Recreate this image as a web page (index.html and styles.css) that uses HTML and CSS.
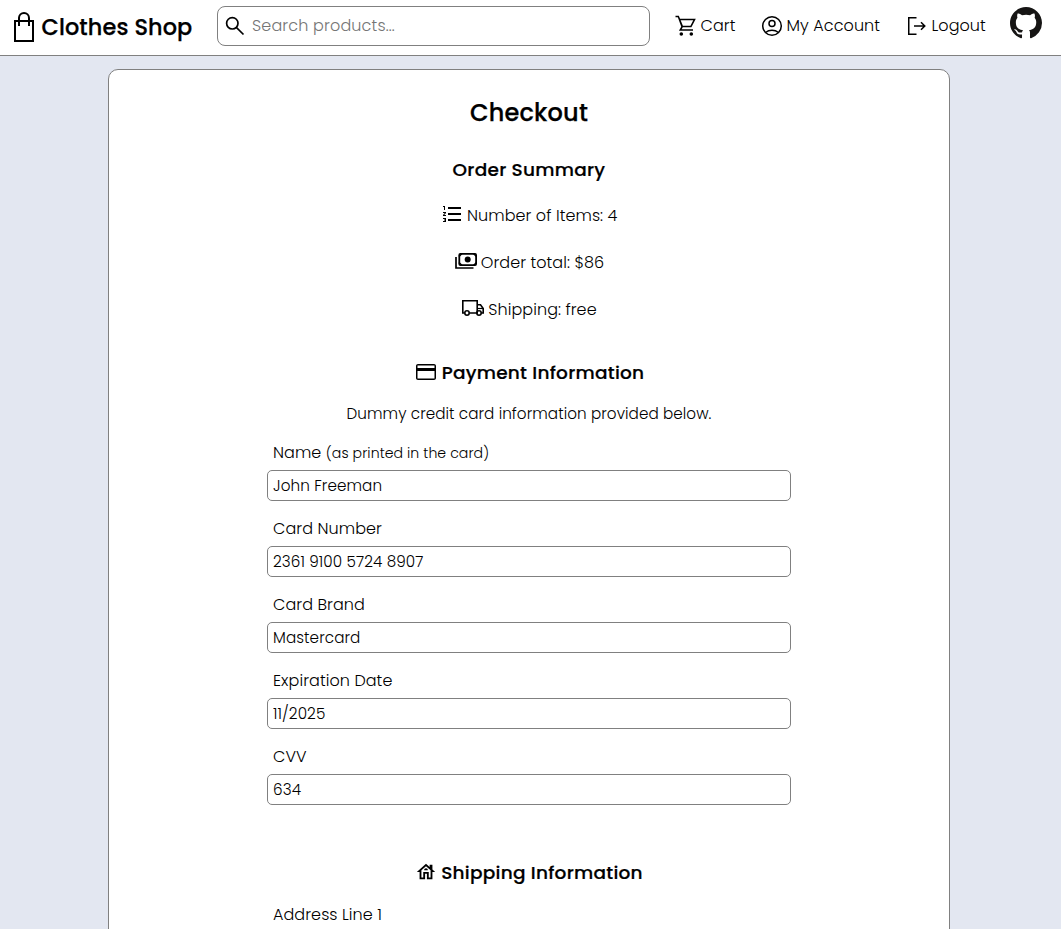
FILE: index.html
```html
<!DOCTYPE html>
<html lang="en">
<head>
<meta charset="utf-8">
<title>Clothes Shop - Checkout</title>
<link rel="stylesheet" href="styles.css">
</head>
<body>
<header class="header">
  <a class="brand">
    <svg width="24" height="32" viewBox="0 0 24 32" fill="none" stroke="#000" stroke-width="2"><path d="M3 10h18v20H3zM7 15V7a5 5 0 0 1 10 0v8"/></svg>
    <span>Clothes Shop</span>
  </a>
  <div class="search">
    <svg width="24" height="24" viewBox="0 0 24 24" fill="none" stroke="#000" stroke-width="1.7"><circle cx="9.3" cy="9.3" r="5.7"/><path d="M13.3 13.3l7.2 7.2"/></svg>
    <span>Search products...</span>
  </div>
  <nav class="nav">
    <a class="nav-item">
      <svg width="24" height="24" viewBox="0 0 24 24"><path d="M5.5 5.500h15l-3.600 7H8zM1.500 2.500H4.300l4 10-2 3.500H19" fill="none" stroke="#000" stroke-width="1.600"/><circle cx="7.300" cy="20" r="1.800"/><circle cx="17.300" cy="20" r="1.800"/></svg>
      <span>Cart</span>
    </a>
    <a class="nav-item">
      <svg width="24" height="24" viewBox="0 0 24 24" fill="none" stroke="#000" stroke-width="1.5"><circle cx="12" cy="12" r="9.300"/><circle cx="12" cy="9.500" r="3"/><path d="M5.500 18.500c3.800-3 9.200-3 13 0"/></svg>
      <span>My Account</span>
    </a>
    <a class="nav-item">
      <svg width="24" height="24" viewBox="0 0 24 24" fill="none" stroke="#000" stroke-width="1.500"><path d="M11.500 3.750H3.750v16.500h7.750M9 12h10.500M16 8.200L19.800 12 16 15.800"/></svg>
      <span>Logout</span>
    </a>
    <a class="github">
      <svg width="32" height="32" viewBox="0 0 16 16" fill="#161514"><path d="M8 0C3.580 0 0 3.580 0 8c0 3.540 2.290 6.530 5.470 7.590.4.070.55-.17.55-.38 0-.19-.01-.82-.01-1.490-2.010.37-2.530-.49-2.690-.94-.09-.23-.48-.94-.82-1.130-.28-.15-.68-.52-.01-.53.63-.01 1.080.58 1.230.82.72 1.210 1.870.87 2.330.66.07-.52.28-.87.51-1.070-1.780-.2-3.640-.89-3.640-3.950 0-.87.31-1.590.82-2.150-.08-.2-.36-1.020.08-2.120 0 0 .67-.21 2.200.82.64-.18 1.320-.27 2-.27s1.360.09 2 .27c1.530-1.040 2.200-.82 2.200-.82.44 1.100.16 1.920.08 2.120.51.56.82 1.270.82 2.150 0 3.070-1.870 3.750-3.650 3.950.29.25.54.73.54 1.480 0 1.070-.01 1.930-.01 2.200 0 .21.15.46.55.38A8.010 8.010 0 0 0 16 8c0-4.420-3.580-8-8-8z"/></svg>
    </a>
  </nav>
</header>
<main class="card">
  <h1 class="title">Checkout</h1>
  <h2 class="heading summary-heading">Order Summary</h2>
  <div class="summary">
    <p class="line items">
      <svg width="24" height="24" viewBox="0 0 24 24"><path d="M2 17h2v.5H3v1h1v.5H2v1h3v-4H2v1zm1-9h1V4H2v1h1v3zm-1 3h1.800L2 13.100v.9h3v-1H3.200L5 10.900V10H2v1zm5-6v2h13V5H7zm0 14h13v-2H7v2zm0-6h13v-2H7v2z"/></svg>
      <span>Number of Items: 4</span>
    </p>
    <p class="line">
      <svg width="24" height="24" viewBox="0 0 24 24" fill="none" stroke="#000" stroke-width="1.800"><rect x="5.300" y="4.900" width="16.800" height="11.200" rx="1"/><path d="M2 8v11h17.500" stroke-width="1.700"/><path d="M5 7.500l3-3M5 13.500l3 3M22.500 7.500l-3-3M22.500 13.500l-3 3" stroke-width="1.500"/><circle cx="13.700" cy="10.500" r="3" fill="#000" stroke="none"/></svg>
      <span>Order total: $86</span>
    </p>
    <p class="line">
      <svg width="24" height="24" viewBox="0 0 24 24" fill="none" stroke="#000" stroke-width="1.600"><path d="M3.500 17H1.800V4.800h14.400V17H8.500M16.200 8.800h3.300l2.700 3.700V17h-1.700"/><path d="M16.500 12.500h5.500" stroke-width="1.200"/><circle cx="6" cy="17" r="2.200"/><circle cx="18" cy="17" r="2.200"/></svg>
      <span>Shipping: free</span>
    </p>
  </div>
  <h2 class="heading payment-heading">
    <svg width="24" height="24" viewBox="0 0 24 24"><path d="M20 4H4c-1.100 0-2 .9-2 2v12c0 1.100.9 2 2 2h16c1.100 0 2-.9 2-2V6c0-1.100-.9-2-2-2zm.5 14.500h-17V11h17v7.500zm0-10.500h-17V5.500h17V8z"/></svg>
    <span>Payment Information</span>
  </h2>
  <p class="note">Dummy credit card information provided below.</p>
  <form class="form">
    <div class="field"><label class="label">Name <small class="hint">(as printed in the card)</small></label><input class="input" value="John Freeman"></div>
    <div class="field"><label class="label">Card Number</label><input class="input" value="2361 9100 5724 8907"></div>
    <div class="field"><label class="label">Card Brand</label><input class="input" value="Mastercard"></div>
    <div class="field"><label class="label">Expiration Date</label><input class="input" value="11/2025"></div>
    <div class="field"><label class="label">CVV</label><input class="input" value="634"></div>
  </form>
  <h2 class="heading address-heading">
    <svg width="22" height="22" viewBox="0 0 24 24" fill-rule="evenodd"><path d="M19 9.300V4h-3v2.600L12 3 2 12h3v8h6v-6h2v6h6v-8h3l-3-2.700zM17 18h-2v-6H9v6H7v-7.810l5-4.500 5 4.500V18zM10 10h4c0-1.100-.9-2-2-2s-2 .9-2 2z"/></svg>
    <span>Shipping Information</span>
  </h2>
  <form class="form address-form">
    <div class="field"><label class="label">Address Line 1</label><input class="input"></div>
  </form>
</main>
</body>
</html>
```
FILE: styles.css
```css
* { box-sizing: border-box; }
html { overflow: hidden; }
body {
  margin: 0;
  height: 929px;
  overflow: hidden;
  background: #e3e7f1;
  color: #000;
  font: 300 16px/24px Poppins, Inter, sans-serif;
  letter-spacing: 0.07px;
}
svg { display: block; flex: none; }
h1, h2, p { margin: 0; }

.header {
  display: flex;
  height: 56px;
  padding: 0 0 3px 12px;
  align-items: center;
  background: #fff;
  border-bottom: 1px solid #808080;
}
.brand {
  display: flex;
  width: 205px;
  gap: 5.5px;
  padding-top: 2px;
  align-items: center;
  font-size: 22.4px;
  font-weight: 500;
  letter-spacing: 0.12px;
  white-space: nowrap;
  -webkit-text-stroke: 0.25px #000;
}
.search {
  display: flex;
  width: 433px;
  height: 40px;
  padding-left: 5px;
  gap: 5px;
  align-items: center;
  border: 1px solid #808080;
  border-radius: 8px;
  color: #757575;
  letter-spacing: 0.15px;
}
.nav {
  display: grid;
  grid-template-columns: 86px 145px 105px 32px;
  margin-left: 24px;
  align-items: center;
}
.nav-item { display: flex; gap: 2.5px; align-items: center; white-space: nowrap; }
.github { margin-bottom: 7px; }

.card {
  width: 842px;
  height: 900px;
  margin: 13px 0 0 108px;
  padding-top: 25px;
  background: #fff;
  border: 1px solid #808080;
  border-radius: 10px;
}
.title {
  font-size: 24px;
  font-weight: 500;
  line-height: 36px;
  letter-spacing: 0.2px;
  text-align: center;
  -webkit-text-stroke: 0.25px #000;
}
.heading {
  display: flex;
  gap: 4px;
  justify-content: center;
  align-items: center;
  height: 28px;
  font-size: 18.5px;
  font-weight: 500;
  letter-spacing: 0.25px;
  -webkit-text-stroke: 0.2px #000;
}
.heading svg { margin-bottom: 2px; }
.summary-heading { margin-top: 25px; }
.summary { display: grid; gap: 23px; margin-top: 20px; }
.line { display: flex; gap: 3px; height: 24px; justify-content: center; align-items: center; }
.line svg { margin-bottom: 4px; }
.items { gap: 2.5px; }
.payment-heading { margin-top: 37px; }
.note { margin-top: 15px; font-size: 15.2px; text-align: center; }

.form { width: 524px; margin: 15px auto 0; }
.field { margin-bottom: 16px; }
.label { display: block; height: 24px; padding-left: 6px; }
.hint { font-size: 14.1px; }
.input {
  display: block;
  width: 100%;
  height: 31px;
  margin-top: 5px;
  padding: 0 5px;
  background: #fff;
  border: 1px solid #808080;
  border-radius: 5px;
  color: #000;
  font: inherit;
  font-size: 15.2px;
  letter-spacing: 0.1px;
}
.address-heading { margin-top: 54px; }
.address-form { margin-top: 16px; }
```
